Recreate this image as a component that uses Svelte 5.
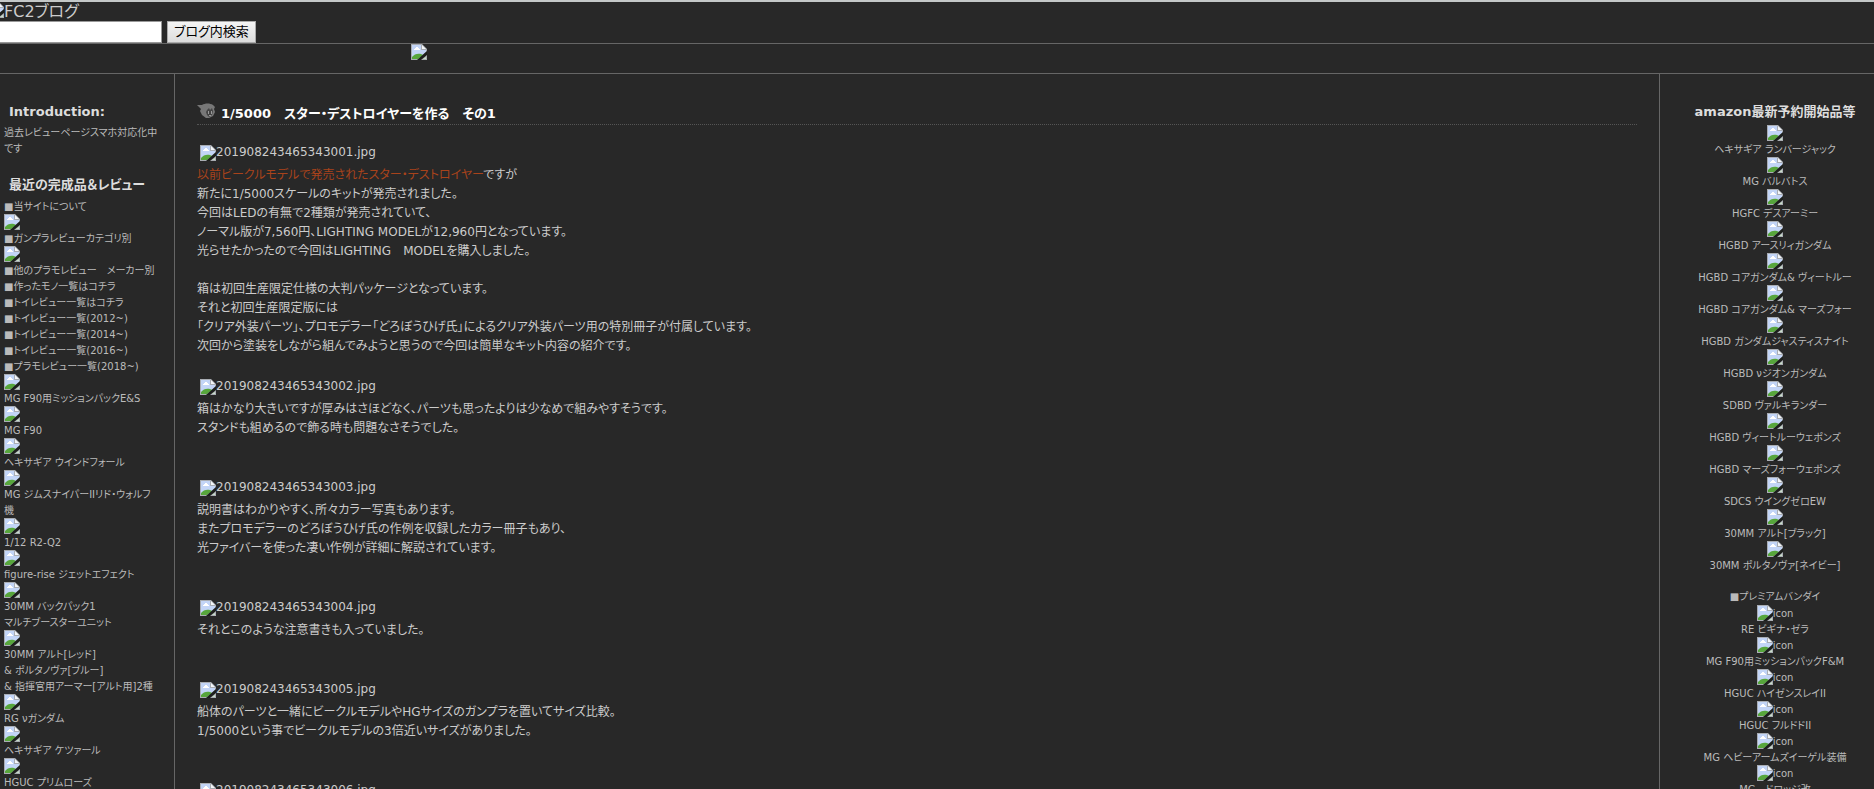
<script>
	// Rows without text draw a picture placeholder instead
	const recent = [
		{ text: '■当サイトについて' },
		{ icon: true },
		{ text: '■ガンプラレビューカテゴリ別' },
		{ icon: true },
		{ text: '■他のプラモレビュー　メーカー別' },
		{ text: '■作ったモノ一覧はコチラ' },
		{ text: '■トイレビュー一覧はコチラ' },
		{ text: '■トイレビュー一覧(2012~)' },
		{ text: '■トイレビュー一覧(2014~)' },
		{ text: '■トイレビュー一覧(2016~)' },
		{ text: '■プラモレビュー一覧(2018~)' },
		{ icon: true },
		{ text: 'MG F90用ミッションパックE&S' },
		{ icon: true },
		{ text: 'MG F90' },
		{ icon: true },
		{ text: 'ヘキサギア ウインドフォール' },
		{ icon: true },
		{ text: 'MG ジムスナイパーIIリド・ウォルフ' },
		{ text: '機' },
		{ icon: true },
		{ text: '1/12 R2-Q2' },
		{ icon: true },
		{ text: 'figure-rise ジェットエフェクト' },
		{ icon: true },
		{ text: '30MM バックパック1' },
		{ text: 'マルチブースターユニット' },
		{ icon: true },
		{ text: '30MM アルト[レッド]' },
		{ text: '& ポルタノヴァ[ブルー]' },
		{ text: '& 指揮官用アーマー[アルト用]2種' },
		{ icon: true },
		{ text: 'RG νガンダム' },
		{ icon: true },
		{ text: 'ヘキサギア ケツァール' },
		{ icon: true },
		{ text: 'HGUC プリムローズ' }
	];

	const amazon = [
		'ヘキサギア ランバージャック',
		'MG バルバトス',
		'HGFC デスアーミー',
		'HGBD アースリィガンダム',
		'HGBD コアガンダム& ヴィートルー',
		'HGBD コアガンダム& マーズフォー',
		'HGBD ガンダムジャスティスナイト',
		'HGBD νジオンガンダム',
		'SDBD ヴァルキランダー',
		'HGBD ヴィートルーウェポンズ',
		'HGBD マーズフォーウェポンズ',
		'SDCS ウイングゼロEW',
		'30MM アルト[ブラック]',
		'30MM ポルタノヴァ[ネイビー]'
	];

	const premium = [
		'RE ビギナ・ゼラ',
		'MG F90用ミッションパックF&M',
		'HGUC ハイゼンスレイII',
		'HGUC フルドドII',
		'MG ヘビーアームズイーゲル装備',
		'MG　ドロッジ改'
	];

	const sections = [
		{
			image: '201908243465343001.jpg',
			link: '以前ビークルモデルで発売されたスター・デストロイヤー',
			lines: [
				'ですが',
				'新たに1/5000スケールのキットが発売されました。',
				'今回はLEDの有無で2種類が発売されていて、',
				'ノーマル版が7,560円、LIGHTING MODELが12,960円となっています。',
				'光らせたかったので今回はLIGHTING　MODELを購入しました。',
				'',
				'箱は初回生産限定仕様の大判パッケージとなっています。',
				'それと初回生産限定版には',
				'「クリア外装パーツ」、プロモデラー「どろぼうひげ氏」によるクリア外装パーツ用の特別冊子が付属しています。',
				'次回から塗装をしながら組んでみようと思うので今回は簡単なキット内容の紹介です。',
				''
			]
		},
		{
			image: '201908243465343002.jpg',
			lines: [
				'箱はかなり大きいですが厚みはさほどなく、パーツも思ったよりは少なめで組みやすそうです。',
				'スタンドも組めるので飾る時も問題なさそうでした。',
				'',
				''
			]
		},
		{
			image: '201908243465343003.jpg',
			lines: [
				'説明書はわかりやすく、所々カラー写真もあります。',
				'またプロモデラーのどろぼうひげ氏の作例を収録したカラー冊子もあり、',
				'光ファイバーを使った凄い作例が詳細に解説されています。',
				'',
				''
			]
		},
		{
			image: '201908243465343004.jpg',
			lines: ['それとこのような注意書きも入っていました。', '', '']
		},
		{
			image: '201908243465343005.jpg',
			lines: [
				'船体のパーツと一緒にビークルモデルやHGサイズのガンプラを置いてサイズ比較。',
				'1/5000という事でビークルモデルの3倍近いサイズがありました。',
				'',
				''
			]
		},
		{ image: '201908243465343006.jpg', lines: [] }
	];
</script>

{#snippet picture()}
	<svg class="picture" viewBox="0 0 16 16" aria-hidden="true">
		<path d="M0 0H11L16 5V8L7 16H0Z" fill="#a9adb3" />
		<path d="M1 1H10V6H15V8L6 15H1Z" fill="#c3d5f7" />
		<path d="M3 6V5H4V4H5V3H7V4H8V5H9V6Z" fill="#fff" />
		<path d="M11 1L15 5H11Z" fill="#f4f6f8" />
		<path d="M1 15V13C3 10 7 9 10 10L12 11L7 15Z" fill="#57a63c" />
		<path d="M16 7L6 16H10L16 11Z" fill="#1c1f1c" />
		<path d="M16 11V16H10Z" fill="#a9adb3" />
		<path d="M15 13V15H12Z" fill="#c9e2c8" />
	</svg>
{/snippet}

<div class="page">
	<header>
		<div class="brand">{@render picture()}<span>FC2ブログ</span></div>
		<form class="search" onsubmit={(e) => e.preventDefault()}>
			<input type="text" name="q" aria-label="ブログ内検索" />
			<button type="submit">ブログ内検索</button>
		</form>
	</header>

	<div class="banner">{@render picture()}</div>

	<div class="columns">
		<aside class="left">
			<h2>Introduction:</h2>
			<p>過去レビューページスマホ対応化中<br />です</p>

			<h2>最近の完成品＆レビュー</h2>
			<ul>
				{#each recent as row}
					<li>
						{#if row.icon}
							{@render picture()}
						{:else}
							<a href="#review">{row.text}</a>
						{/if}
					</li>
				{/each}
			</ul>
		</aside>

		<main>
			<h1>
				<svg class="head" viewBox="0 0 18 15" aria-hidden="true">
					<path
						d="M0 2L5 2C8 0 13 0 16 2L18 4L17 6L18 9L16 13L12 15H9L5 12L3 8L4 6Z"
						fill="#777"
					/>
					<path d="M10 7L12 5L13 7L15 5L16 8L15 12L12 14L10 12L9 9Z" fill="#444" />
					<path d="M11 8H12V11H11ZM14 8H15V11H14ZM12 12H14V13H12Z" fill="#999" />
				</svg>
				<span>1/5000　スター・デストロイヤーを作る　その1</span>
			</h1>

			{#each sections as section}
				<section>
					<div class="photo">{@render picture()}<span>{section.image}</span></div>
					{#each section.lines as line, i}
						<p>
							{#if i === 0 && section.link}<a href="#vehicle">{section.link}</a>{/if}{line}
						</p>
					{/each}
				</section>
			{/each}
		</main>

		<aside class="right">
			<h2>amazon最新予約開始品等</h2>
			<ul>
				{#each amazon as name}
					<li>{@render picture()}</li>
					<li><a href="#item">{name}</a></li>
				{/each}
			</ul>
			<h3>■プレミアムバンダイ</h3>
			<ul>
				{#each premium as name}
					<li>{@render picture()}<span>icon</span></li>
					<li><a href="#item">{name}</a></li>
				{/each}
			</ul>
		</aside>
	</div>
</div>

<style>
	:global(body) {
		margin: 0;
		background: #282828;
		overflow: hidden;
	}

	.page {
		border-top: 2px solid #c4c8c8;
		color: #ccc;
		font-family: Verdana, 'DejaVu Sans', 'Noto Sans CJK JP', sans-serif;
		font-size: 12px;
		line-height: 19px;
		font-feature-settings: 'palt';
		white-space: nowrap;
	}

	.picture {
		width: 16px;
		height: 16px;
		flex: none;
	}

	/* The header starts a little beyond the left edge of the window */
	header {
		margin-left: -12px;
		border-bottom: 1px solid #666;
	}

	.brand {
		display: flex;
		height: 19px;
		font-size: 16px;
		line-height: 20px;
	}

	.search {
		display: flex;
		gap: 5px;
	}

	.search input {
		box-sizing: border-box;
		width: 174px;
		height: 22px;
		border: 1px solid #999;
		background: #fff;
		font: inherit;
	}

	.search button {
		box-sizing: border-box;
		height: 22px;
		padding: 0 6px;
		border: 1px solid #aaa;
		background: linear-gradient(#f4f4f4, #dcdcdc);
		color: #000;
		font: inherit;
		font-size: 13px;
		line-height: 20px;
		font-feature-settings: 'palt';
	}

	.banner {
		height: 29px;
		padding-left: 411px;
		border-bottom: 1px solid #666;
	}

	.banner .picture {
		display: block;
	}

	.columns {
		display: flex;
		min-height: calc(100vh - 74px);
	}

	aside {
		box-sizing: border-box;
		flex: none;
		padding-top: 28px;
		color: #bbb;
		font-size: 10px;
		line-height: 16px;
	}

	.left {
		width: 175px;
		padding-left: 4px;
		border-right: 1px solid #666;
	}

	.right {
		width: 215px;
		padding-left: 16px;
		border-left: 1px solid #666;
		text-align: center;
	}

	h2 {
		margin: 0;
		padding-bottom: 3px;
		color: #ddd;
		font-size: 13px;
		line-height: 20px;
	}

	.left h2 {
		padding-left: 5px;
	}

	.left p {
		margin: 0 0 18px;
	}

	ul {
		margin: 0;
		padding: 0;
		list-style: none;
	}

	li {
		display: flex;
		height: 16px;
		line-height: 18px;
	}

	.right li {
		justify-content: center;
	}

	aside a {
		color: inherit;
		text-decoration: none;
	}

	h3 {
		margin: 16px 0 0;
		font-size: 10px;
		font-weight: normal;
	}

	main {
		flex: 1;
		min-width: 0;
		padding: 29px 22px 0;
	}

	h1 {
		display: flex;
		align-items: flex-start;
		gap: 6px;
		margin: 0 0 15px;
		border-bottom: 1px dotted #555;
		color: #fff;
		font-size: 13px;
		line-height: 21px;
	}

	.head {
		width: 18px;
		height: 15px;
	}

	main p {
		height: 19px;
		margin: 0;
		line-height: 20px;
	}

	main p a {
		color: #a8431b;
		text-decoration: none;
	}

	.photo {
		display: flex;
		align-items: center;
		height: 25px;
		padding-left: 3px;
	}
</style>
